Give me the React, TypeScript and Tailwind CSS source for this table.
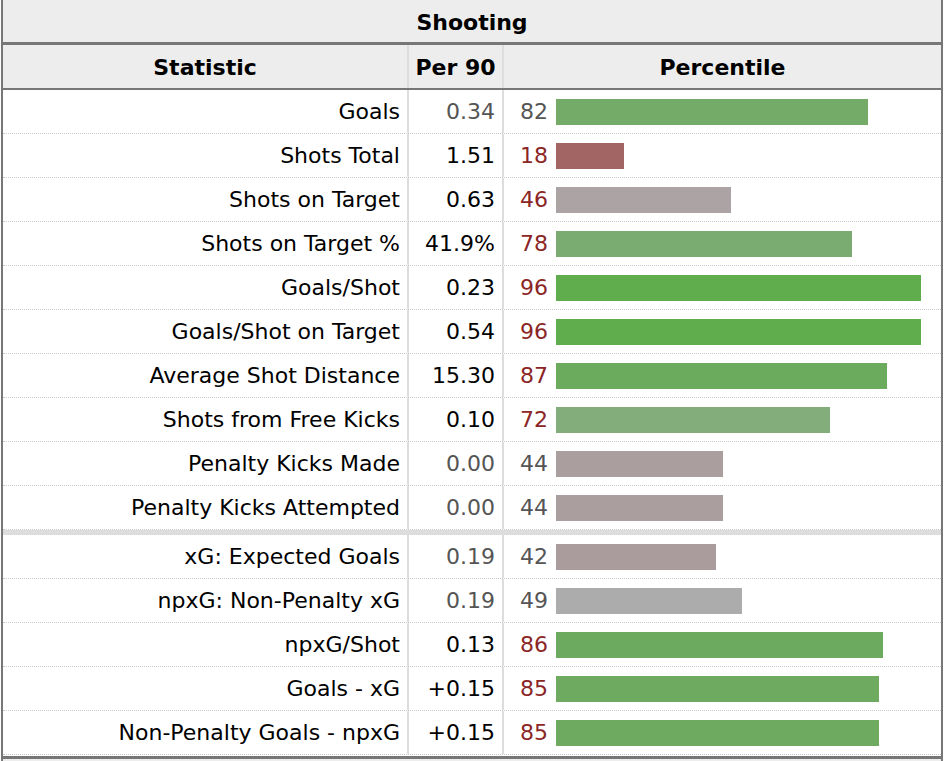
type Row = {
  stat: string;
  per90: string;
  pct: number;
  strong: boolean;
  bar: string;
};

const SHOOTING: Row[] = [
  { stat: "Goals", per90: "0.34", pct: 82, strong: false, bar: "bg-[#74ab68]" },
  { stat: "Shots Total", per90: "1.51", pct: 18, strong: true, bar: "bg-[#a36464]" },
  { stat: "Shots on Target", per90: "0.63", pct: 46, strong: true, bar: "bg-[#aca3a4]" },
  { stat: "Shots on Target %", per90: "41.9%", pct: 78, strong: true, bar: "bg-[#7aab70]" },
  { stat: "Goals/Shot", per90: "0.23", pct: 96, strong: true, bar: "bg-[#5fad4d]" },
  { stat: "Goals/Shot on Target", per90: "0.54", pct: 96, strong: true, bar: "bg-[#5fad4d]" },
  { stat: "Average Shot Distance", per90: "15.30", pct: 87, strong: true, bar: "bg-[#6bab5d]" },
  { stat: "Shots from Free Kicks", per90: "0.10", pct: 72, strong: true, bar: "bg-[#84ad7c]" },
  { stat: "Penalty Kicks Made", per90: "0.00", pct: 44, strong: false, bar: "bg-[#ab9e9e]" },
  { stat: "Penalty Kicks Attempted", per90: "0.00", pct: 44, strong: false, bar: "bg-[#ab9e9e]" },
];

const EXPECTED: Row[] = [
  { stat: "xG: Expected Goals", per90: "0.19", pct: 42, strong: false, bar: "bg-[#aa9c9c]" },
  { stat: "npxG: Non-Penalty xG", per90: "0.19", pct: 49, strong: false, bar: "bg-[#adacac]" },
  { stat: "npxG/Shot", per90: "0.13", pct: 86, strong: true, bar: "bg-[#6cab5f]" },
  { stat: "Goals - xG", per90: "+0.15", pct: 85, strong: true, bar: "bg-[#6eab61]" },
  { stat: "Non-Penalty Goals - npxG", per90: "+0.15", pct: 85, strong: true, bar: "bg-[#6eab61]" },
];

function StatRow({ row }: { row: Row }) {
  return (
    <div className="flex h-[44px] border-b border-dotted border-[#c8c8c8]">
      <div className="flex w-[406px] items-center justify-end border-r-2 border-[#dddddd] pr-[7px] pt-px text-black">
        {row.stat}
      </div>
      <div
        className={`flex w-[95px] items-center justify-end border-r-2 border-[#dddddd] pr-[7px] pt-px ${
          row.strong ? "text-black" : "text-[#555555]"
        }`}
      >
        {row.per90}
      </div>
      <div className="flex flex-1 items-center pl-[16px]">
        <span
          className={`w-[36px] pt-px ${
            row.strong ? "text-[#8b2626]" : "text-[#555555]"
          }`}
        >
          {row.pct}
        </span>
        {/* 100th percentile = 380px */}
        <div
          className={`h-[26px] ${row.bar}`}
          style={{ width: `${Math.round(row.pct * 3.8)}px` }}
        />
      </div>
    </div>
  );
}

export default function App() {
  return (
    <div
      className="min-h-screen bg-white text-[22px] leading-none"
      style={{ fontFamily: '"DejaVu Sans", Verdana, sans-serif' }}
    >
      <div className="ml-px w-[942px] border-x-2 border-[#777777]">
        <div className="flex h-[45px] items-center justify-center border-b-[3px] border-[#777777] bg-[#ededed] pt-[3px] font-bold text-black">
          Shooting
        </div>

        <div className="flex h-[45px] border-b-2 border-[#777777] bg-[#ededed] font-bold text-black">
          <div className="flex w-[406px] items-center justify-center border-r-2 border-[#dddddd] pt-[3px]">
            Statistic
          </div>
          <div className="flex w-[95px] items-center justify-center border-r-2 border-[#dddddd] pt-[3px]">
            Per 90
          </div>
          <div className="flex flex-1 items-center justify-center pt-[3px]">
            Percentile
          </div>
        </div>

        {SHOOTING.map((r) => (
          <StatRow key={r.stat} row={r} />
        ))}

        <div className="h-[5px] bg-[#dddddd]" />

        {EXPECTED.map((r) => (
          <StatRow key={r.stat} row={r} />
        ))}

        <div className="h-px" />
        <div className="h-[3px] bg-[#777777]" />
        <div className="h-[20px] bg-[#ededed]" />
      </div>
    </div>
  );
}
